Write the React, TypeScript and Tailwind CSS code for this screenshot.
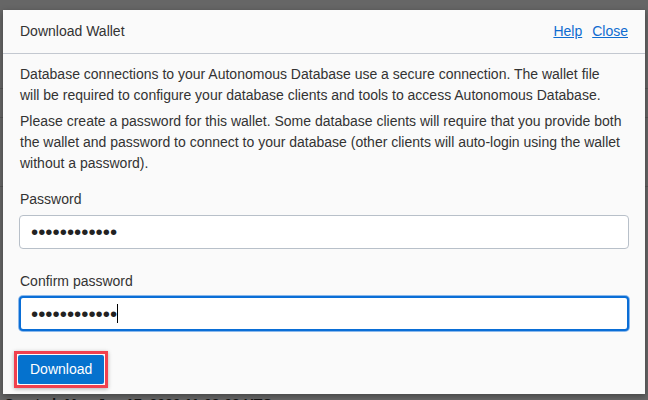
export default function App() {
  return (
    <div className="relative h-[400px] w-full overflow-hidden bg-white font-['Liberation_Sans',Arial,sans-serif] text-[14px] text-[#333]">
      {/* page behind the dialog */}
      <div className="flex flex-col">
        <div className="h-[89px] border-b border-[#d6d6d6]" />
        <div className="h-[29px] border-b border-[#d6d6d6]" />
        <div className="h-[69px] border-b border-[#d6d6d6]" />
        <div className="h-[207px]" />
        <div className="px-[4px] leading-[20px] font-bold">Created: Mon Jun 17, 2020 11:08:08 UTC</div>
      </div>

      <div className="absolute inset-0 bg-black/60" />

      {/* dialog */}
      <div className="absolute left-[3px] top-[10px] w-[642px] h-[384px] bg-[#fafafa] shadow-[0_2px_6px_rgba(0,0,0,0.35)]">
        <div className="flex items-center justify-between border-b border-[#c3c8d0] px-[17px] py-[11px] leading-[21px]">
          <h1 className="text-[14px] text-[#333]">Download Wallet</h1>
          <div className="flex gap-[10px]">
            <a href="#" className="text-[#0f6cd0] underline">Help</a>
            <a href="#" className="text-[#0f6cd0] underline">Close</a>
          </div>
        </div>

        <div className="px-[16px] pt-[10px] leading-[21px]">
          <p className="mb-[5px] pl-px pr-[7px]">
            Database connections to your Autonomous Database use a secure connection. The wallet file will be required
            to configure your database clients and tools to access Autonomous Database.
          </p>
          <p className="pl-px pr-[7px]">
            Please create a password for this wallet. Some database clients will require that you provide both the
            wallet and password to connect to your database (other clients will auto-login using the wallet without a
            password).
          </p>

          <label className="mt-[15px] block px-px">Password</label>
          <input
            type="password"
            defaultValue="Welcome12345"
            readOnly
            className="mt-[5px] block h-[34px] w-full rounded-[4px] border border-[#b8c0c9] bg-white px-[11px] text-[20.5px] text-[#222] outline-none"
          />

          <label className="mt-[22px] block px-px">Confirm password</label>
          <div className="relative mt-[4px]">
            <input
              type="password"
              defaultValue="Welcome12345"
              readOnly
              className="block h-[35px] w-full rounded-[4px] border-2 border-[#0a6ed6] bg-white px-[10px] text-[20.5px] text-[#222] outline-none ring-1 ring-[#8ab8ec]"
            />
            {/* text caret */}
            <span className="absolute left-[98px] top-[8px] h-[19px] w-px bg-black" />
          </div>

          <div className="-ml-[5px] mt-[20px] inline-block border-[3px] border-[#f0404e] p-px shadow-[0_1px_4px_rgba(0,0,0,0.3)]">
            <button className="block h-[29px] rounded-[2px] bg-[#0572ce] px-[12px] text-[14px] leading-[29px] text-white">
              Download
            </button>
          </div>
        </div>
      </div>
    </div>
  );
}
